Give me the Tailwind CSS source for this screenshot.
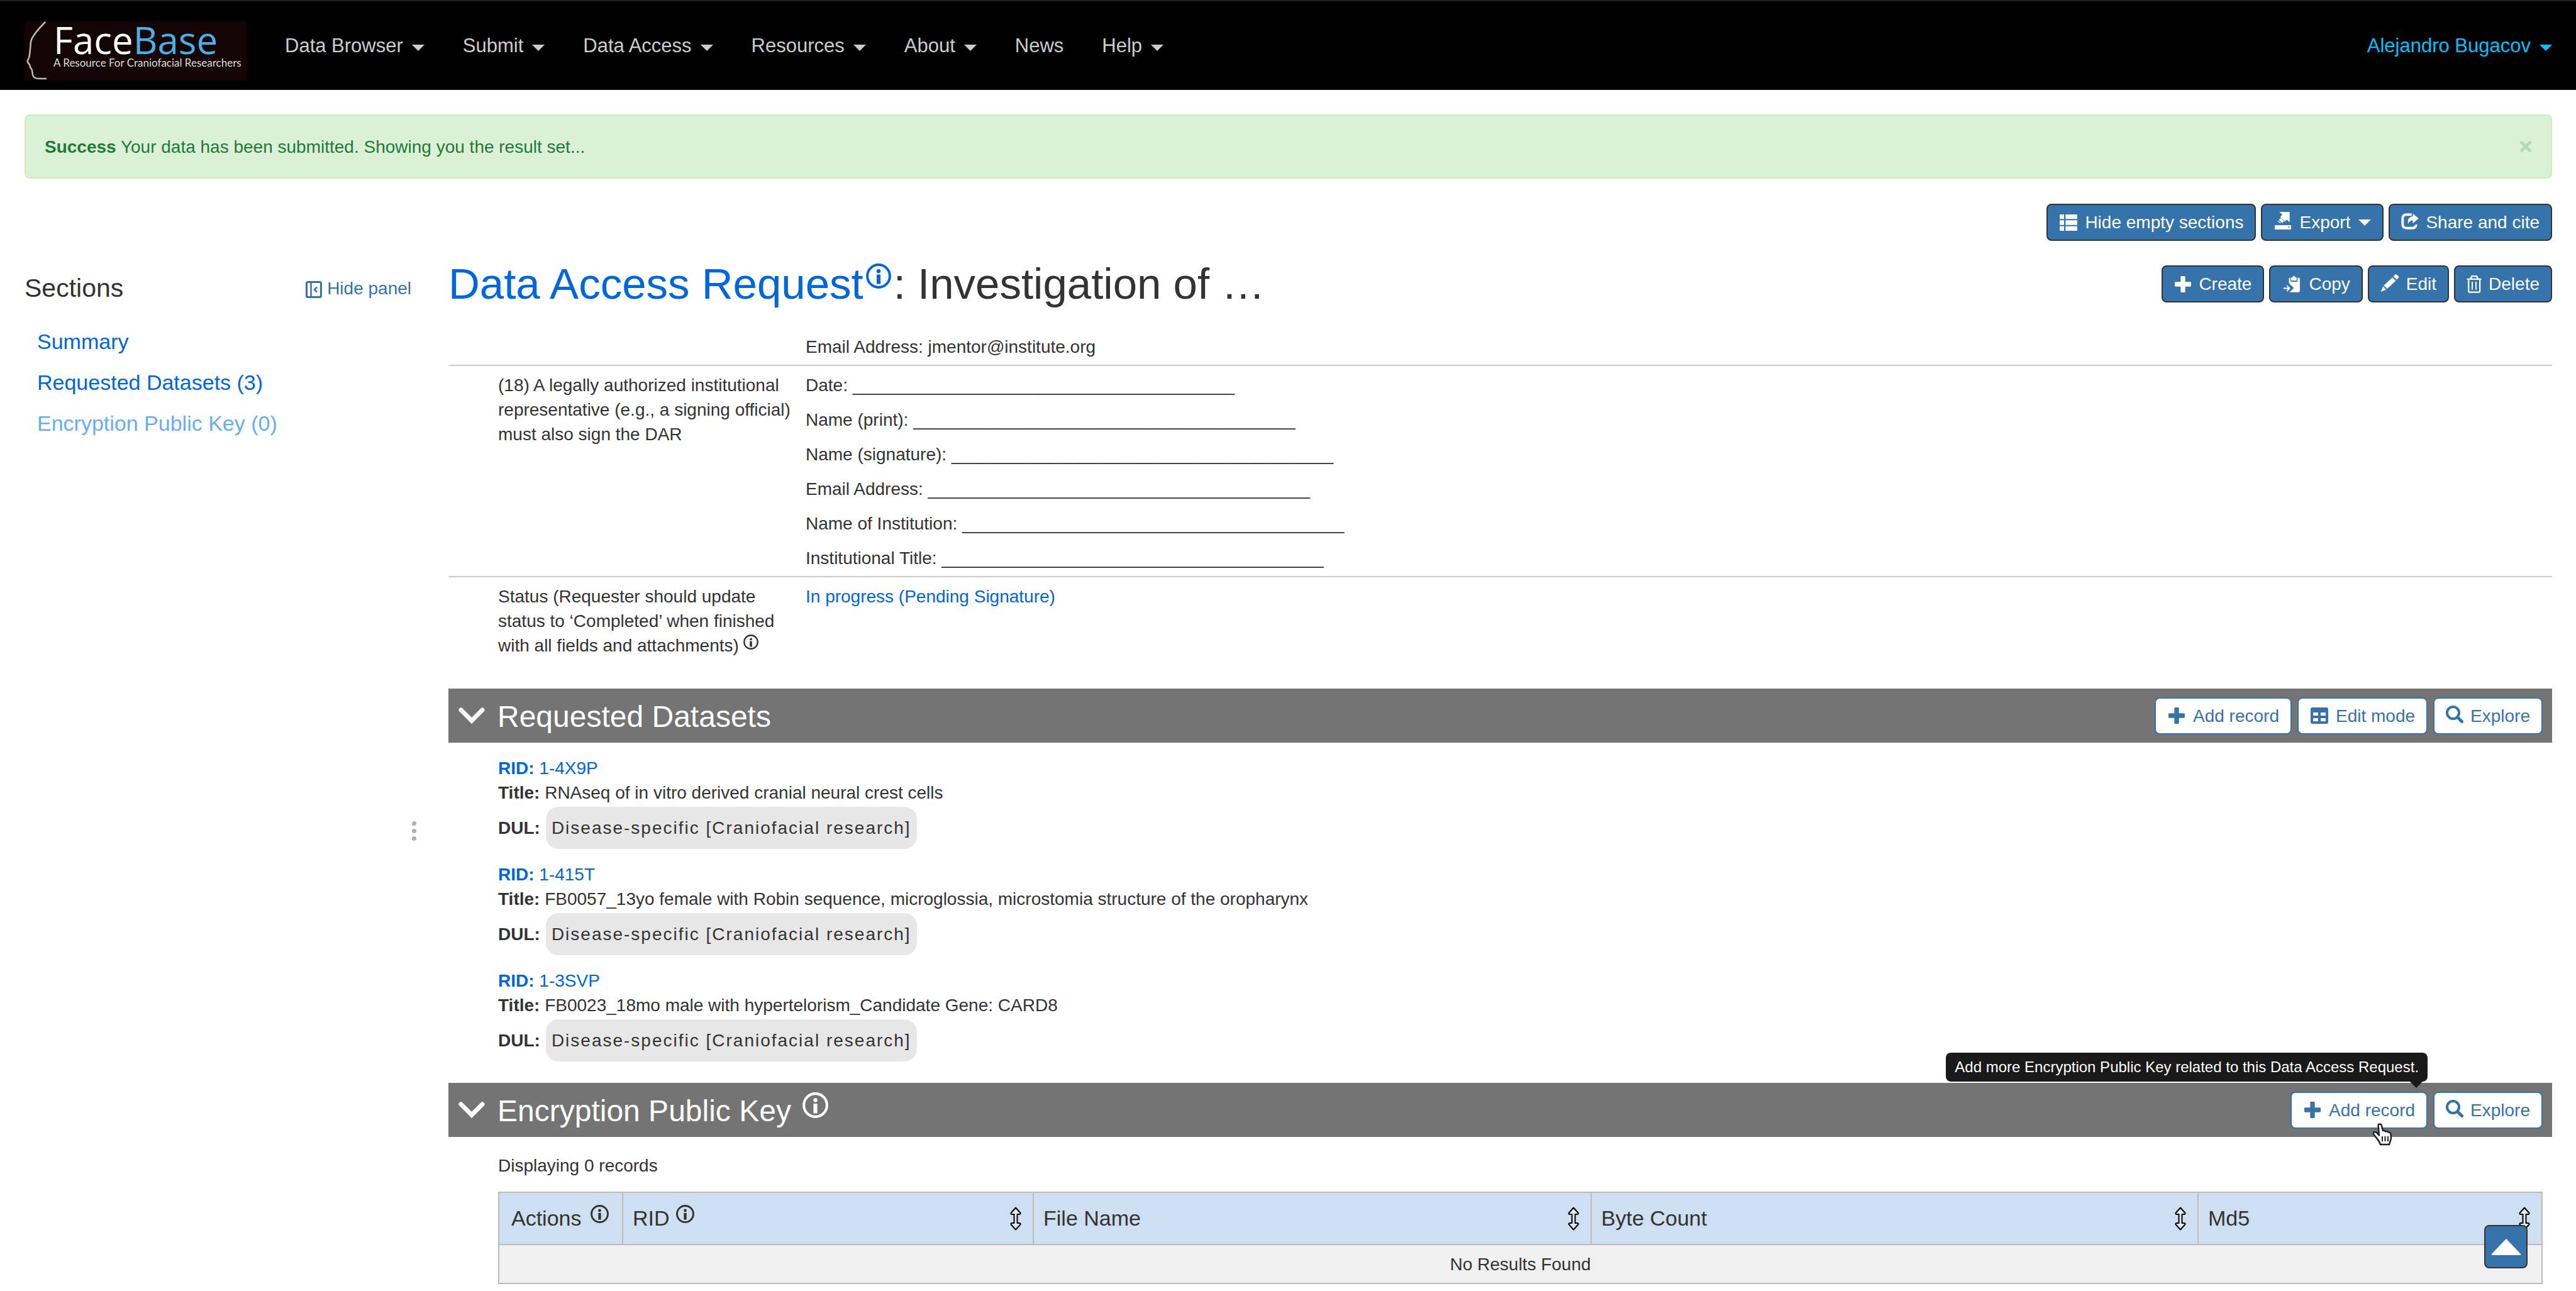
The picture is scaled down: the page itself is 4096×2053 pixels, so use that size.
<!DOCTYPE html>
<html lang="en">
<head>
<meta charset="utf-8">
<title>FaceBase: Data Access Request</title>
<script src="https://cdn.jsdelivr.net/npm/@tailwindcss/browser@4"></script>
</head>
<body class="min-h-screen bg-white font-['Liberation_Sans',Arial,sans-serif] text-[28px] leading-[39px] text-[#333]">

<!-- Icon sprite -->
<svg class="hidden" aria-hidden="true">
  <symbol id="info" viewBox="0 0 40 40"><circle cx="20" cy="20" r="17.9" fill="none" stroke="currentColor" stroke-width="4"/><circle cx="20" cy="12.3" r="3.2" fill="currentColor"/><rect x="17" y="17.6" width="6" height="15" fill="currentColor"/></symbol>
  <symbol id="plus" viewBox="0 0 78 78"><path fill="currentColor" d="M32 0h14q4 0 4 4v24h24q4 0 4 4v14q0 4-4 4H50v24q0 4-4 4H32q-4 0-4-4V50H4q-4 0-4-4V32q0-4 4-4h24V4q0-4 4-4z"/></symbol>
  <symbol id="list" viewBox="0 0 84 78"><path fill="currentColor" d="M3 0h18v22H0V3q0-3 3-3zM28 0h53q3 0 3 3v19H28zM0 28h21v22H0zM28 28h56v22H28zM0 56h21v22H3q-3 0-3-3zM28 56h56v19q0 3-3 3H28z"/></symbol>
  <symbol id="export" viewBox="0 0 78 84"><path fill="currentColor" d="M22 0H71V49L57 37 48 46 26 25 36 13zM29 29L44 45 35 53 20 38zM18 42L30 54 25 53 15 46z"/><path fill="currentColor" fill-rule="evenodd" d="M3 63h72q3 0 3 3v18H0V66q0-3 3-3zM65 69v6h5v-6z"/></symbol>
  <symbol id="share" viewBox="0 0 84 80"><path fill="none" stroke="currentColor" stroke-width="12" d="M50 7H26Q6 7 6 26V54Q6 73 26 73H53Q70 73 71 58"/><path fill="currentColor" d="M56 2L84 25 56 50V35Q40 35 32 53 28 18 56 15zM66 60l11-8v10z"/></symbol>
  <symbol id="copy" viewBox="0 0 79 79"><path fill="currentColor" d="M26 8H33V22q0 6 6 6H62q6 0 6-6V8H73q6 0 6 6V71q0 7-7 7H28L50 58 26 34z"/><path fill="currentColor" d="M37 7h6q0-7 7-7t7 7h6v15H37z"/><path fill="none" stroke="currentColor" stroke-width="6" d="M0 59H27M16 46L29 59 16 73"/></symbol>
  <symbol id="pencil" viewBox="0 0 88 86"><path fill="currentColor" d="M56 16L73 32 32 71 14 55zM11 60L27 76 0 86zM61 11L71 1q3-2 6 1L87 11q2 3 0 6L78 27z"/></symbol>
  <symbol id="trash" viewBox="0 0 72 86"><path fill="none" stroke="currentColor" stroke-width="7" stroke-linejoin="round" d="M9 19V76q0 6 6 6H58q6 0 6-6V19"/><path fill="none" stroke="currentColor" stroke-width="7" stroke-linecap="round" d="M3.500 18H68.500M19 15L25 3.500H48L54 15"/><path fill="none" stroke="currentColor" stroke-width="6" d="M27 31V70M45 31V70"/></symbol>
  <symbol id="grid" viewBox="0 0 28 26"><path fill="currentColor" fill-rule="evenodd" d="M3 0h22q3 0 3 3v20q0 3-3 3H3q-3 0-3-3V3q0-3 3-3zM4 8v5h8V8zM16 8v5h8V8zM4 17v5h8v-5zM16 17v5h8v-5z"/></symbol>
  <symbol id="search" viewBox="0 0 28 28"><circle cx="11.500" cy="11.500" r="9.500" fill="none" stroke="currentColor" stroke-width="4"/><path stroke="currentColor" stroke-width="5" stroke-linecap="round" d="M19 19L25.500 25.500"/></symbol>
  <symbol id="caret" viewBox="0 0 20 10"><path fill="currentColor" d="M0 0H20L10 10z"/></symbol>
  <symbol id="chevron" viewBox="0 0 42 26"><path fill="none" stroke="currentColor" stroke-width="7" stroke-linecap="round" d="M4 4L21 21 38 4"/></symbol>
  <symbol id="sort" viewBox="0 0 18 38"><path fill="#fff" fill-opacity=".35" stroke="#000" stroke-width="2" stroke-linejoin="round" d="M9 1.500L16.500 10Q17 12 15 12H11.500V26H15Q17 26 16.500 28L9 36.500 1.500 28Q1 26 3 26H6.500V12H3Q1 12 1.500 10z"/></symbol>
  <symbol id="panel" viewBox="0 0 26 27"><rect x="1.500" y="1.500" width="23" height="24" rx="2" fill="none" stroke="currentColor" stroke-width="3"/><path fill="none" stroke="currentColor" stroke-width="2.500" d="M8.500 2V25M18 9.500L14 13.500 18 17.500"/></symbol>
</svg>

<header class="flex h-[143px] items-center border-t-2 border-[#222] bg-black pr-[38px] pl-[39px] text-[31px] leading-10 text-[#ccc]">
  <a href="#" class="relative mt-4 flex h-[94px] w-[354px] flex-col bg-[#140504] pl-[46px]" aria-label="FaceBase home">
    <svg class="absolute top-0 left-0 h-[94px] w-10" viewBox="0 0 40 94" fill="none" stroke="#bbb" stroke-width="2.500" aria-hidden="true"><path d="M33 1C26 8 20 14 15 22C9 30 10 34 9 44C8 52 9 56 5 62C3 66 10 68 9 73C13 76 12 80 13 85C15 92 20 91 35 91"/></svg>
    <span class="font-['Open_Sans',sans-serif] text-[60px] leading-[58px] font-medium text-white">Face<span class="text-[#47b0ea]">Base</span></span>
    <span class="font-['Lato',sans-serif] text-[17px] leading-4 whitespace-nowrap text-[#ddd]">A Resource For Craniofacial Researchers</span>
  </a>
  <nav class="ml-[60px] flex gap-[61px]" aria-label="Main">
    <button class="flex items-center gap-3.5">Data Browser <svg class="mt-1.5 h-2.5 w-5"><use href="#caret"/></svg></button>
    <button class="flex items-center gap-3.5">Submit <svg class="mt-1.5 h-2.5 w-5"><use href="#caret"/></svg></button>
    <button class="flex items-center gap-3.5">Data Access <svg class="mt-1.5 h-2.5 w-5"><use href="#caret"/></svg></button>
    <button class="flex items-center gap-3.5">Resources <svg class="mt-1.5 h-2.5 w-5"><use href="#caret"/></svg></button>
    <button class="flex items-center gap-3.5">About <svg class="mt-1.5 h-2.5 w-5"><use href="#caret"/></svg></button>
    <a href="#">News</a>
    <button class="flex items-center gap-3.5">Help <svg class="mt-1.5 h-2.5 w-5"><use href="#caret"/></svg></button>
  </nav>
  <button class="ml-auto flex items-center gap-3.5 text-[#00c0ff]">Alejandro Bugacov <svg class="mt-1.5 h-2.5 w-5"><use href="#caret"/></svg></button>
</header>

<div class="pt-[39px] pr-[38px] pl-[39px]">
  <div role="alert" class="flex h-[102px] items-center rounded-lg border-2 border-[#cfebc4] bg-[#dbf1d6] px-[30px] text-[#1f7a37]">
    <p><strong>Success</strong> Your data has been submitted. Showing you the result set...</p>
    <button class="ml-auto text-[#b5d9b4]" aria-label="Close"><svg class="size-5" viewBox="0 0 20 20"><path stroke="currentColor" stroke-width="5" d="M2 2L18 18M18 2L2 18"/></svg></button>
  </div>

  <div class="mt-10 flex justify-end gap-2 text-white">
    <button class="flex h-[59px] items-center gap-[11px] rounded-lg border-2 border-[#333] bg-[#3573aa] px-[18px]"><svg class="h-[26px] w-[30px]"><use href="#list"/></svg>Hide empty sections</button>
    <button class="flex h-[59px] items-center gap-[11px] rounded-lg border-2 border-[#333] bg-[#3573aa] px-[18px]"><svg class="mb-1.5 h-7 w-[30px]"><use href="#export"/></svg>Export<svg class="ml-0.5 h-2.5 w-5"><use href="#caret"/></svg></button>
    <button class="flex h-[59px] items-center gap-[11px] rounded-lg border-2 border-[#333] bg-[#3573aa] px-[18px]"><svg class="mb-1 h-[26px] w-7"><use href="#share"/></svg>Share and cite</button>
  </div>

  <div class="flex">
    <aside class="w-[615px] shrink-0 pt-[46px]">
      <div class="flex h-[59px] items-center justify-between">
        <h2 class="text-[41px] leading-none">Sections</h2>
        <button class="flex items-center gap-2 text-[#3573aa]"><svg class="mt-1 h-[27px] w-[26px]"><use href="#panel"/></svg>Hide panel</button>
      </div>
      <nav class="mt-[23px] flex flex-col pl-5 text-[34px] leading-[65px] text-[#0066dc]" aria-label="Sections">
        <a href="#summary">Summary</a>
        <a href="#datasets">Requested Datasets (3)</a>
        <a href="#keys" class="text-[#66aef0]">Encryption Public Key (0)</a>
      </nav>
    </aside>
    <div class="flex w-[59px] shrink-0 flex-col justify-center gap-[5px] pt-[210px] pl-px" role="separator" aria-orientation="vertical">
      <span class="size-[7px] rounded-full bg-[#b0b0b0]"></span>
      <span class="size-[7px] rounded-full bg-[#b0b0b0]"></span>
      <span class="size-[7px] rounded-full bg-[#b0b0b0]"></span>
    </div>

    <main class="min-w-0 flex-1 pt-[39px]">
      <div class="flex h-[59px] items-center justify-between">
        <h1 class="flex items-center text-[69px] leading-none whitespace-pre"><a href="#" class="mr-1 flex items-center gap-1 text-[#0066dc]">Data Access Request<svg class="mb-[26px] size-10"><use href="#info"/></svg></a>: Investigation of …</h1>
        <div class="flex gap-2 text-[28px] text-white">
          <button class="flex h-[59px] items-center gap-[11px] rounded-lg border-2 border-[#333] bg-[#3573aa] px-[18px]"><svg class="h-[26px] w-7"><use href="#plus"/></svg>Create</button>
          <button class="flex h-[59px] items-center gap-[11px] rounded-lg border-2 border-[#333] bg-[#3573aa] px-[18px]"><svg class="h-[26px] w-8"><use href="#copy"/></svg>Copy</button>
          <button class="flex h-[59px] items-center gap-[11px] rounded-lg border-2 border-[#333] bg-[#3573aa] px-[18px]"><svg class="mb-1 h-7 w-[30px]"><use href="#pencil"/></svg>Edit</button>
          <button class="flex h-[59px] items-center gap-[11px] rounded-lg border-2 border-[#333] bg-[#3573aa] px-[18px]"><svg class="h-7 w-6"><use href="#trash"/></svg>Delete</button>
        </div>
      </div>

      <!-- Record content, scrolled under the title -->
      <div class="mt-[31px] overflow-hidden">
        <table id="summary" class="-mt-[46px] w-full">
          <tbody class="align-top">
            <tr class="border-b-2 border-[#ccc]">
              <th class="w-[568px]"></th>
              <td class="flex flex-col gap-4 pt-[11px] pb-[9px]">
                <p>Name (signature):</p>
                <p>Email Address: jmentor@institute.org</p>
              </td>
            </tr>
            <tr class="border-b-2 border-[#ccc]">
              <th class="w-[568px] pt-[11px] pl-[79px] text-left font-normal">(18) A legally authorized institutional<br>representative (e.g., a signing official)<br>must also sign the DAR</th>
              <td class="flex flex-col gap-4 pt-[11px] pb-[9px]">
                <p>Date: _______________________________________</p>
                <p>Name (print): _______________________________________</p>
                <p>Name (signature): _______________________________________</p>
                <p>Email Address: _______________________________________</p>
                <p>Name of Institution: _______________________________________</p>
                <p>Institutional Title: _______________________________________</p>
              </td>
            </tr>
            <tr>
              <th class="w-[568px] pt-[11px] pb-[9px] pl-[79px] text-left font-normal">Status (Requester should update<br>status to ‘Completed’ when finished<br><span class="flex items-center gap-[7px]">with all fields and attachments) <svg class="mb-3 size-6"><use href="#info"/></svg></span></th>
              <td class="pt-[11px]"><a href="#" class="text-[#0066dc]">In progress (Pending Signature)</a></td>
            </tr>
          </tbody>
        </table>

        <section id="datasets" class="mt-10">
          <div class="flex h-[86px] items-center bg-[#747474] pr-[15px] pl-4 text-white">
            <svg class="h-[26px] w-[42px]"><use href="#chevron"/></svg>
            <h2 class="ml-5 pt-[3px] text-[48px] leading-none">Requested Datasets</h2>
            <div class="ml-auto flex gap-[9px] text-[#3573aa]">
              <button class="flex h-[59px] items-center gap-[11px] rounded-lg border-2 border-[#3573aa] bg-white px-[18px]"><svg class="h-[26px] w-[30px]"><use href="#plus"/></svg>Add record</button>
              <button class="flex h-[59px] items-center gap-[11px] rounded-lg border-2 border-[#3573aa] bg-white px-[18px]"><svg class="h-[26px] w-[30px]"><use href="#grid"/></svg>Edit mode</button>
              <button class="flex h-[59px] items-center gap-[11px] rounded-lg border-2 border-[#3573aa] bg-white px-[18px]"><svg class="mb-1 size-7"><use href="#search"/></svg>Explore</button>
            </div>
          </div>
          <ul class="mt-[21px] flex flex-col gap-[21px] pl-[79px]">
            <li>
              <p class="text-[#0066dc]"><b>RID:</b> <a href="#">1-4X9P</a></p>
              <p><b>Title:</b> RNAseq of in vitro derived cranial neural crest cells</p>
              <p class="mt-[3px] flex h-[67px] items-center gap-[9px]"><b>DUL:</b><span class="rounded-[20px] bg-[#e7e7e7] px-[9px] py-3.5 tracking-[2px]">Disease-specific [Craniofacial research]</span></p>
            </li>
            <li>
              <p class="text-[#0066dc]"><b>RID:</b> <a href="#">1-415T</a></p>
              <p><b>Title:</b> FB0057_13yo female with Robin sequence, microglossia, microstomia structure of the oropharynx</p>
              <p class="mt-[3px] flex h-[67px] items-center gap-[9px]"><b>DUL:</b><span class="rounded-[20px] bg-[#e7e7e7] px-[9px] py-3.5 tracking-[2px]">Disease-specific [Craniofacial research]</span></p>
            </li>
            <li>
              <p class="text-[#0066dc]"><b>RID:</b> <a href="#">1-3SVP</a></p>
              <p><b>Title:</b> FB0023_18mo male with hypertelorism_Candidate Gene: CARD8</p>
              <p class="mt-[3px] flex h-[67px] items-center gap-[9px]"><b>DUL:</b><span class="rounded-[20px] bg-[#e7e7e7] px-[9px] py-3.5 tracking-[2px]">Disease-specific [Craniofacial research]</span></p>
            </li>
          </ul>
        </section>

        <section id="keys" class="mt-[34px]">
          <div class="flex h-[86px] items-center bg-[#747474] pr-[15px] pl-4 text-white">
            <svg class="h-[26px] w-[42px]"><use href="#chevron"/></svg>
            <h2 class="ml-5 flex items-center gap-[18px] pt-[3px] text-[48px] leading-none">Encryption Public Key <svg class="mb-[18px] size-[41px]"><use href="#info"/></svg></h2>
            <div class="ml-auto flex gap-[9px] text-[#3573aa]">
              <div class="relative">
                <button aria-describedby="add-tip" class="flex h-[59px] items-center gap-[11px] rounded-lg border-2 border-[#3573aa] bg-white px-[18px]"><svg class="h-[26px] w-[30px]"><use href="#plus"/></svg>Add record</button>
                <div id="add-tip" role="tooltip" class="absolute right-0 bottom-[75px] flex h-[46px] items-center rounded-lg bg-[#1a1a1a] px-3.5 text-[24px] whitespace-nowrap text-white">Add more Encryption Public Key related to this Data Access Request.<svg class="absolute top-full right-2 h-2.5 w-5 text-[#1a1a1a]"><use href="#caret"/></svg></div>
                <svg class="absolute top-[50px] left-[130px] h-9 w-8" viewBox="0 0 32 36" aria-hidden="true"><path d="M9.500 4Q9.500 1.500 12 1.500T15 4.500L17 12Q20 11 21 13.500Q24 12 25.500 14.500Q29 14 29.500 18L30 24Q29 28 27 34H13Q11 28 7 24L2.500 18Q1 15 3.500 14Q6 13.500 8 16L11 19.500z" fill="#fff" stroke="#222" stroke-width="2.500" stroke-linejoin="round"/><path d="M16 21V29M20.500 21V29M25 21V29" stroke="#222" stroke-width="2"/></svg>
              </div>
              <button class="flex h-[59px] items-center gap-[11px] rounded-lg border-2 border-[#3573aa] bg-white px-[18px]"><svg class="mb-1 size-7"><use href="#search"/></svg>Explore</button>
            </div>
          </div>
          <div class="pt-[26px] pr-[15px] pb-2 pl-[79px]">
            <p>Displaying 0 records</p>
            <table class="mt-[22px] w-full table-fixed border-collapse">
              <thead class="bg-[#cddff0] text-[34px]">
                <tr>
                  <th class="h-[83px] w-[197px] border-2 border-[#bbb] pl-[19px] font-normal"><span class="flex items-center gap-3.5">Actions <svg class="mb-3.5 size-[29px]"><use href="#info"/></svg></span></th>
                  <th class="w-[20.1%] border-2 border-[#bbb] pr-[18px] pl-[15px] font-normal"><span class="flex items-center gap-2.5">RID <svg class="mb-3.5 size-[29px]"><use href="#info"/></svg><svg class="ml-auto h-[38px] w-[18px]"><use href="#sort"/></svg></span></th>
                  <th class="w-[27.3%] border-2 border-[#bbb] pr-[18px] pl-[15px] font-normal"><span class="flex items-center">File Name<svg class="ml-auto h-[38px] w-[18px]"><use href="#sort"/></svg></span></th>
                  <th class="w-[29.7%] border-2 border-[#bbb] pr-[18px] pl-[15px] font-normal"><span class="flex items-center">Byte Count<svg class="ml-auto h-[38px] w-[18px]"><use href="#sort"/></svg></span></th>
                  <th class="border-2 border-[#bbb] pr-[18px] pl-[15px] font-normal"><span class="flex items-center">Md5<svg class="ml-auto h-[38px] w-[18px]"><use href="#sort"/></svg></span></th>
                </tr>
              </thead>
              <tbody>
                <tr><td colspan="5" class="h-[62px] border-2 border-[#bbb] bg-[#f0f0f0] text-center">No Results Found</td></tr>
              </tbody>
            </table>
          </div>
        </section>
      </div>
    </main>
  </div>
</div>

<button aria-label="Scroll to top" class="fixed right-[77px] bottom-9 flex size-[69px] items-center justify-center rounded-lg border-2 border-[#333] bg-[#3573aa] text-white"><svg class="h-[26px] w-[46px]" viewBox="0 0 46 26"><path fill="currentColor" d="M23 0L46 24V26H0V24z"/></svg></button>
</body>
</html>
